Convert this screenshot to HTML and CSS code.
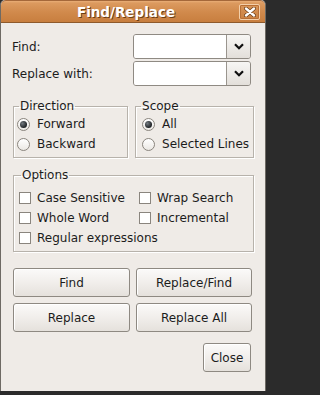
FILE: index.html
```html
<!DOCTYPE html>
<html>
<head>
<meta charset="utf-8">
<link rel="stylesheet" href="styles.css">
</head>
<body>
<div class="window">
  <div class="titlebar">
    <span class="title">Find/Replace</span>
    <span class="close-x"><svg width="12" height="10" viewBox="0 0 12 10"><path d="M2 1.5 L10 8.5 M10 1.5 L2 8.5" stroke="#6a3c16" stroke-width="3.8" stroke-linecap="round"/><path d="M2 1.5 L10 8.5 M10 1.5 L2 8.5" stroke="#fff" stroke-width="2.4" stroke-linecap="round"/></svg></span>
  </div>
  <div class="content">
    <div class="form">
      <div class="form-row">
        <span class="label">Find:</span>
        <div class="combo"><div class="entry"></div><div class="drop"><svg width="10" height="7" viewBox="0 0 10 7"><path d="M1 1.2 L5 5.2 L9 1.2" fill="none" stroke="#111" stroke-width="2.2"/></svg></div></div>
      </div>
      <div class="form-row">
        <span class="label">Replace with:</span>
        <div class="combo"><div class="entry"></div><div class="drop"><svg width="10" height="7" viewBox="0 0 10 7"><path d="M1 1.2 L5 5.2 L9 1.2" fill="none" stroke="#111" stroke-width="2.2"/></svg></div></div>
      </div>
    </div>
    <div class="frames">
      <fieldset class="frame dir">
        <legend>Direction</legend>
        <div class="opt"><span class="radio checked"></span><span>Forward</span></div>
        <div class="opt"><span class="radio"></span><span>Backward</span></div>
      </fieldset>
      <fieldset class="frame scope">
        <legend>Scope</legend>
        <div class="opt"><span class="radio checked"></span><span>All</span></div>
        <div class="opt"><span class="radio"></span><span>Selected Lines</span></div>
      </fieldset>
    </div>
    <fieldset class="frame options">
      <legend>Options</legend>
      <div class="checks">
        <div class="opt"><span class="check"></span><span>Case Sensitive</span></div>
        <div class="opt"><span class="check"></span><span>Wrap Search</span></div>
        <div class="opt"><span class="check"></span><span>Whole Word</span></div>
        <div class="opt"><span class="check"></span><span>Incremental</span></div>
        <div class="opt wide"><span class="check"></span><span>Regular expressions</span></div>
      </div>
    </fieldset>
    <div class="buttons">
      <button class="btn">Find</button>
      <button class="btn">Replace/Find</button>
      <button class="btn">Replace</button>
      <button class="btn">Replace All</button>
    </div>
    <div class="close-row">
      <button class="btn close">Close</button>
    </div>
  </div>
</div>
</body>
</html>
```
FILE: styles.css
```css
html, body {
  margin: 0;
  padding: 0;
  background: #2b2b2b;
}
body {
  width: 267px;
  height: 395px;
  overflow: hidden;
  font-family: "DejaVu Sans", "Liberation Sans", sans-serif;
  font-size: 12px;
  color: #1c1c1c;
}
.window {
  width: 266px;
  height: 391px;
  background: #efebe7;
  border-left: 1px solid #6e6a64;
  border-right: 1px solid #6e6a64;
  border-radius: 5px 5px 0 0;
  display: flex;
  flex-direction: column;
  overflow: hidden;
  box-sizing: border-box;
}
.titlebar {
  height: 23px;
  box-sizing: border-box;
  background: linear-gradient(#e9ae77 0px, #dc9a5f 2px, #d18a4c 11px, #c77d3d 22px);
  border-bottom: 1px solid #8e5a2c;
  border-top: 1px solid #a5683a;
  border-radius: 5px 5px 0 0;
  display: flex;
  align-items: center;
  justify-content: center;
  position: relative;
}
.title {
  color: #fff;
  font-weight: bold;
  font-size: 13.5px;
  text-shadow: 1px 1px 0 #6d3d14;
  margin-left: -14px;
}
.close-x {
  position: absolute;
  left: 238px;
  top: 3px;
  width: 21px;
  height: 16px;
  box-sizing: border-box;
  border: 1px solid #f3cfaa;
  box-shadow: inset 0 0 0 1px #b86f35;
  border-radius: 2px;
  display: flex;
  align-items: center;
  justify-content: center;
}
.content {
  padding: 11px 11px 0 12px;
  display: flex;
  flex-direction: column;
}
.form {
  display: flex;
  flex-direction: column;
  gap: 2px;
}
.form-row {
  display: flex;
  align-items: center;
  justify-content: space-between;
  height: 25px;
}
.label {
  margin-left: -1px;
}
.combo {
  width: 118px;
  height: 25px;
  box-sizing: border-box;
  border: 1px solid #8f8a83;
  border-radius: 3px;
  display: flex;
  margin-right: 3px;
  overflow: hidden;
  box-shadow: inset 1px 1px 0 #c9c5bf;
}
.entry {
  flex: 1;
  background: #fff;
}
.drop {
  width: 23px;
  border-left: 1px solid #9a958e;
  background: linear-gradient(#f7f6f4, #e3dfda);
  display: flex;
  align-items: center;
  justify-content: center;
}
.frames {
  display: flex;
  gap: 7px;
  margin-top: 13px;
}
.frame {
  margin: 0;
  padding: 1px 3px 3px 3px;
  border: 1px solid #b7b2ab;
  box-shadow: 1px 1px 0 #ffffff, inset 1px 1px 0 #ffffff;
  min-width: 0;
}
.frame legend {
  padding: 0 1px;
  margin-left: 2px;
  line-height: 14px;
}
.dir {
  width: 116px;
  box-sizing: border-box;
}
.scope {
  width: 120px;
  box-sizing: border-box;
}
.opt {
  display: flex;
  align-items: center;
  height: 20px;
  white-space: nowrap;
}
.wide {
  grid-column: 1 / span 2;
}
.radio {
  flex-shrink: 0;
  width: 13px;
  height: 13px;
  box-sizing: border-box;
  border: 1px solid #8a857e;
  border-radius: 50%;
  background: linear-gradient(#ffffff, #ebe8e4);
  margin-right: 7px;
  display: flex;
  align-items: center;
  justify-content: center;
}
.radio.checked::after {
  content: "";
  width: 7px;
  height: 7px;
  border-radius: 50%;
  background: radial-gradient(circle at 35% 35%, #737a80, #1f2326 70%);
}
.scope .radio {
  margin-left: 3px;
}
.options {
  width: 241px;
  box-sizing: border-box;
  margin-top: 10px;
  padding: 6px 3px 3px 5px;
}
.checks {
  display: grid;
  grid-template-columns: 120px 1fr;
}
.check {
  flex-shrink: 0;
  width: 12px;
  height: 12px;
  box-sizing: border-box;
  border: 1px solid #8a857e;
  background: #fff;
  margin-right: 6px;
}
.buttons {
  display: grid;
  grid-template-columns: 117px 116px;
  column-gap: 6px;
  row-gap: 6px;
  margin-top: 16px;
}
.btn {
  height: 29px;
  box-sizing: border-box;
  border: 1px solid #8e8982;
  border-radius: 3px;
  background: linear-gradient(#fbfaf9, #f1eeeb 50%, #e5e1dc);
  box-shadow: inset 1px 1px 0 #fff;
  font-family: "DejaVu Sans", "Liberation Sans", sans-serif;
  font-size: 12px;
  color: #1c1c1c;
  padding: 0;
  margin: 0;
}
.close-row {
  display: flex;
  justify-content: flex-end;
  margin-top: 11px;
  padding-right: 3px;
}
.close {
  width: 48px;
}
```
